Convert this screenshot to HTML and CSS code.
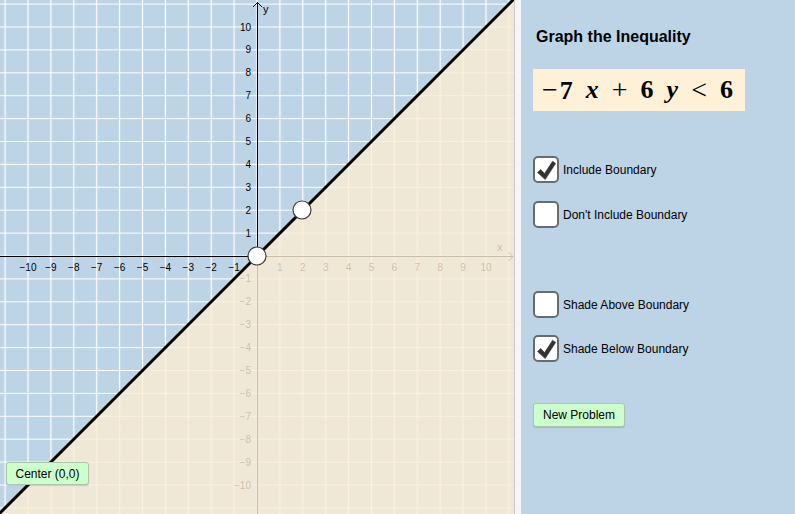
FILE: index.html
```html
<!DOCTYPE html>
<html lang="en">
<head>
  <meta charset="UTF-8">
  <title>Graph the Inequality</title>
  <link rel="stylesheet" href="styles.css">
</head>
<body>
  <div class="app">
    <div class="graph">
      <svg class="plane" width="514" height="514" viewBox="0 0 514 514">
        <defs>
          <pattern id="grid" x="245.55" y="244.55" width="22.9" height="22.9" patternUnits="userSpaceOnUse">
            <path class="grid-line" d="M11.45 0 V22.9 M0 11.45 H22.9"/>
          </pattern>
        </defs>
        <rect class="bg" width="514" height="514"/>
        <rect width="514" height="514" fill="url(#grid)"/>

        <!-- axes -->
        <path class="axis" d="M257.5 2 V514 M0 256.5 H513"/>
        <path class="arrow" d="M253 7 L257.5 2.5 L262 7 M508.5 252 L513 256.5 L508.5 261"/>
        <text class="axis-name" x="263" y="13">y</text>
        <text class="axis-name" x="497" y="251">x</text>

        <!-- x labels -->
        <g class="lbl x-lbl">
          <text x="28" y="270.5">−10</text>
          <text x="50.9" y="270.5">−9</text>
          <text x="73.8" y="270.5">−8</text>
          <text x="96.7" y="270.5">−7</text>
          <text x="119.6" y="270.5">−6</text>
          <text x="142.5" y="270.5">−5</text>
          <text x="165.4" y="270.5">−4</text>
          <text x="188.3" y="270.5">−3</text>
          <text x="211.2" y="270.5">−2</text>
          <text x="234.1" y="270.5">−1</text>
          <text x="279.9" y="270.5">1</text>
          <text x="302.8" y="270.5">2</text>
          <text x="325.7" y="270.5">3</text>
          <text x="348.6" y="270.5">4</text>
          <text x="371.5" y="270.5">5</text>
          <text x="394.4" y="270.5">6</text>
          <text x="417.3" y="270.5">7</text>
          <text x="440.2" y="270.5">8</text>
          <text x="463.1" y="270.5">9</text>
          <text x="486" y="270.5">10</text>
        </g>

        <!-- y labels -->
        <g class="lbl y-lbl">
          <text x="251" y="30.5">10</text>
          <text x="251" y="53.4">9</text>
          <text x="251" y="76.3">8</text>
          <text x="251" y="99.2">7</text>
          <text x="251" y="122.1">6</text>
          <text x="251" y="145">5</text>
          <text x="251" y="167.9">4</text>
          <text x="251" y="190.8">3</text>
          <text x="251" y="213.7">2</text>
          <text x="251" y="236.6">1</text>
          <text x="251" y="282.4">−1</text>
          <text x="251" y="305.3">−2</text>
          <text x="251" y="328.2">−3</text>
          <text x="251" y="351.1">−4</text>
          <text x="251" y="374">−5</text>
          <text x="251" y="396.9">−6</text>
          <text x="251" y="419.8">−7</text>
          <text x="251" y="442.7">−8</text>
          <text x="251" y="465.6">−9</text>
          <text x="251" y="488.5">−10</text>
        </g>

        <!-- shaded half plane, boundary and points -->
        <polygon class="shade" points="0,513 513,0 514,0 514,514 0,514"/>
        <line class="boundary" x1="-5" y1="518" x2="518" y2="-5"/>
        <circle class="pt" cx="257" cy="256" r="9"/>
        <circle class="pt" cx="302" cy="210" r="9"/>
      </svg>

      <button class="btn center-btn">Center (0,0)</button>
    </div>

    <div class="gap"></div>

    <div class="panel">
      <div class="title">Graph the Inequality</div>
      <div class="math">
        <span class="n"><span class="neg">−</span>7</span><span class="v">x</span><span class="o">+</span><span class="n">6</span><span class="v">y</span><span class="o">&lt;</span><span class="n">6</span>
      </div>

      <label class="check row1">
        <svg class="box" width="26" height="27" viewBox="0 0 26 27">
          <rect x="1" y="1" width="24" height="25" rx="4"/>
          <path class="tick" d="M4.5 16.5 L7.6 13.4 L11.6 17.6 L19.6 5.2 L22.6 7.4 L12.2 23.6 Z"/>
        </svg>
        <span>Include Boundary</span>
      </label>
      <label class="check row2">
        <svg class="box" width="26" height="27" viewBox="0 0 26 27">
          <rect x="1" y="1" width="24" height="25" rx="4"/>
        </svg>
        <span>Don't Include Boundary</span>
      </label>
      <label class="check row3">
        <svg class="box" width="26" height="27" viewBox="0 0 26 27">
          <rect x="1" y="1" width="24" height="25" rx="4"/>
        </svg>
        <span>Shade Above Boundary</span>
      </label>
      <label class="check row4">
        <svg class="box" width="26" height="27" viewBox="0 0 26 27">
          <rect x="1" y="1" width="24" height="25" rx="4"/>
          <path class="tick" d="M4.5 16.5 L7.6 13.4 L11.6 17.6 L19.6 5.2 L22.6 7.4 L12.2 23.6 Z"/>
        </svg>
        <span>Shade Below Boundary</span>
      </label>

      <button class="btn new-btn">New Problem</button>
    </div>
  </div>
</body>
</html>
```

FILE: styles.css
```css
body {
  margin: 0;
  font-family: "Liberation Sans", Arial, sans-serif;
  background-color: #bdd4e6;
}

.app {
  display: flex;
  width: 795px;
  height: 514px;
  overflow: hidden;
}

.graph {
  position: relative;
  width: 514px;
  height: 514px;
  border-right: 1px solid #c9c9c9;
}
.plane {
  display: block;
}
.bg {
  fill: #bdd4e6;
}
.grid-line {
  stroke: #ffffff;
  stroke-width: 1.2;
  fill: none;
}
.axis {
  stroke: #000;
  stroke-width: 1;
  fill: none;
}
.arrow {
  stroke: #000;
  stroke-width: 1;
  fill: none;
}
.axis-name {
  font: 11px "Liberation Sans", Arial, sans-serif;
  fill: #000;
}
.lbl text {
  font: 10px "Liberation Sans", Arial, sans-serif;
  fill: #000;
}
.x-lbl text {
  text-anchor: middle;
}
.y-lbl text {
  text-anchor: end;
}
.shade {
  fill: rgb(252, 236, 211);
  fill-opacity: 0.8;
}
.boundary {
  stroke: #000;
  stroke-width: 3;
}
.pt {
  fill: #fff;
  stroke: #3a3a3a;
  stroke-width: 1.2;
}

.btn {
  font: 12px "Liberation Sans", Arial, sans-serif;
  color: #000;
  background-color: #ccffcc;
  border: 1px solid #a9c7a9;
  border-radius: 3px;
  padding: 0;
  box-shadow: 0 1px 1px rgba(0, 0, 0, 0.15);
}
.center-btn {
  position: absolute;
  left: 6px;
  top: 462px;
  width: 83px;
  height: 23px;
}

.gap {
  width: 6px;
  background-color: #f6f6f6;
}

.panel {
  flex: 1;
  display: flex;
  flex-direction: column;
  align-items: flex-start;
  padding-left: 12px;
  background-color: #bdd4e6;
}
.title {
  margin-top: 28px;
  margin-left: 3px;
  font-size: 16px;
  font-weight: bold;
  line-height: 18px;
}
.math {
  margin-top: 23px;
  width: 212px;
  height: 42px;
  box-sizing: border-box;
  padding-left: 9px;
  display: flex;
  align-items: center;
  gap: 13px;
  background-color: #fff0d8;
  font-family: "Liberation Serif", "DejaVu Serif", serif;
  font-size: 26px;
  white-space: nowrap;
}
.math .n {
  font-weight: bold;
}
.math .neg {
  font-weight: normal;
  font-size: 28px;
  margin-right: 2px;
}
.math .v {
  font-style: italic;
  font-weight: bold;
}
.math .o {
  font-size: 28px;
}

.check {
  display: flex;
  align-items: center;
  font-size: 12px;
}
.check span {
  margin-left: 4px;
}
.box {
  display: block;
}
.box rect {
  fill: #fff;
  stroke: #676c70;
  stroke-width: 2;
}
.box .tick {
  fill: #333;
  stroke: #333;
  stroke-width: 0.6;
  stroke-linejoin: round;
}
.row1 {
  margin-top: 45px;
}
.row2 {
  margin-top: 18px;
}
.row3 {
  margin-top: 63px;
}
.row4 {
  margin-top: 17px;
}

.new-btn {
  margin-top: 41px;
  width: 92px;
  height: 24px;
}
```
